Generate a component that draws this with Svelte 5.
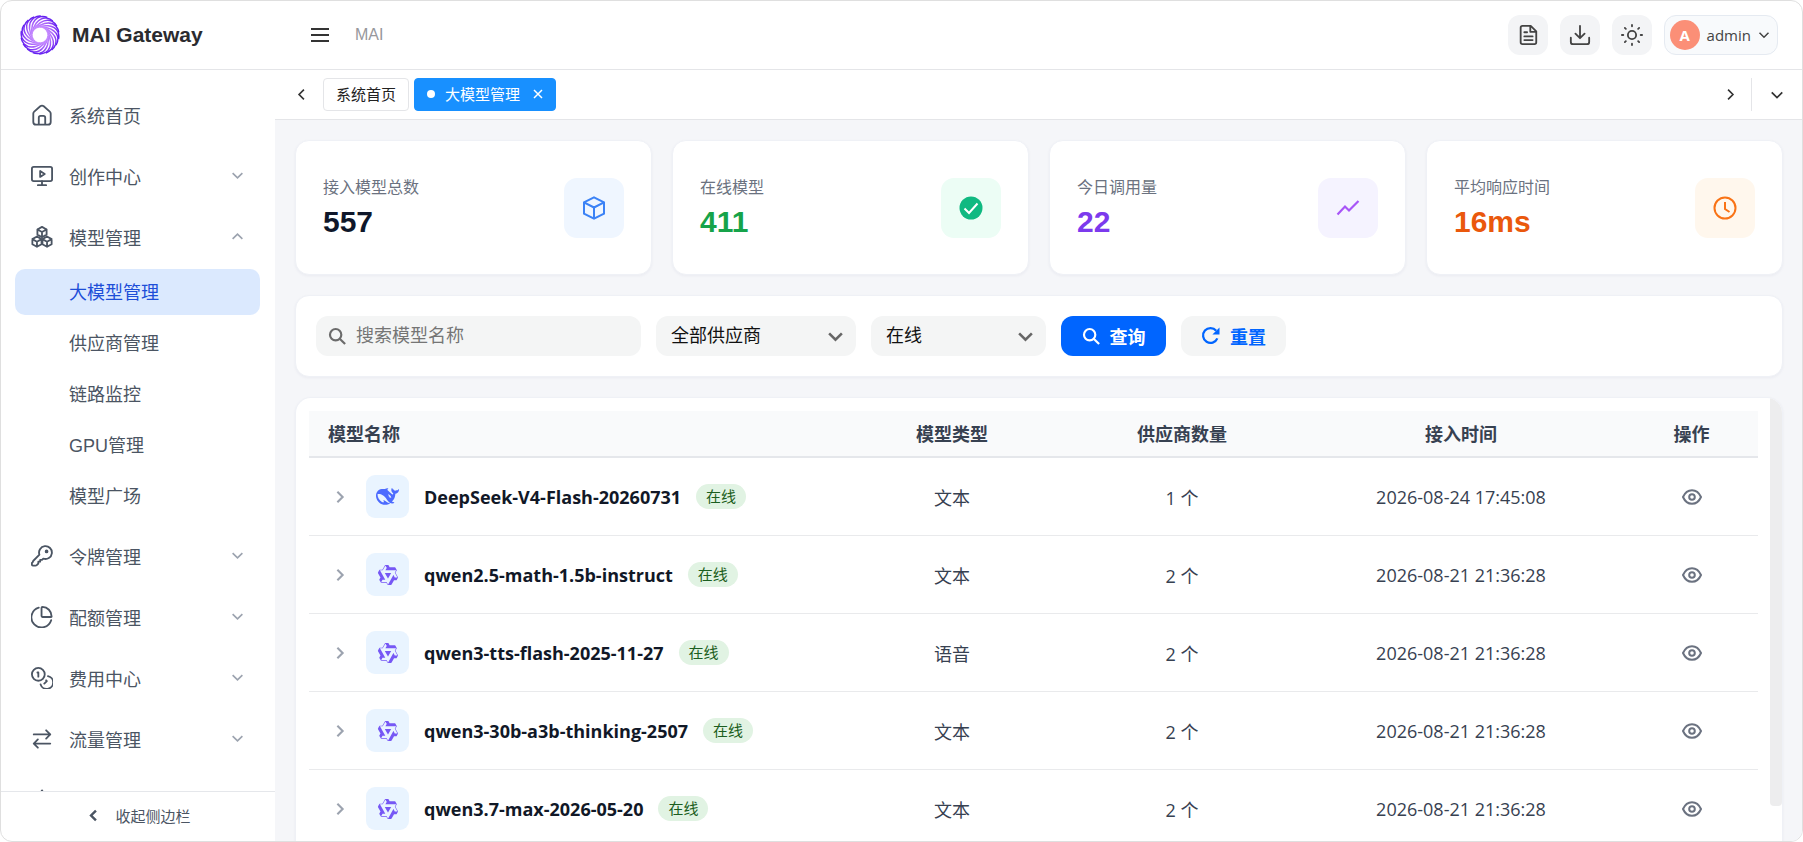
<script lang="ts">
    type MenuItem = {
        label?: string
        icon: string
        open?: boolean
        leaf?: boolean
        children?: string[]
    }

    const menu: MenuItem[] = [
        {label: "系统首页", icon: "home", leaf: true},
        {label: "创作中心", icon: "screen"},
        {
            label: "模型管理",
            icon: "cubes",
            open: true,
            children: ["大模型管理", "供应商管理", "链路监控", "GPU管理", "模型广场"]
        },
        {label: "令牌管理", icon: "key"},
        {label: "配额管理", icon: "pie"},
        {label: "费用中心", icon: "coins"},
        {label: "流量管理", icon: "swap"},
        {icon: "gear"}
    ]

    const stats = [
        {label: "接入模型总数", value: "557", kind: "total"},
        {label: "在线模型", value: "411", kind: "online"},
        {label: "今日调用量", value: "22", kind: "calls"},
        {label: "平均响应时间", value: "16ms", kind: "latency"}
    ]

    const models = [
        {name: "DeepSeek-V4-Flash-20260731", vendor: "deepseek", type: "文本", suppliers: 1, time: "2026-08-24 17:45:08"},
        {name: "qwen2.5-math-1.5b-instruct", vendor: "qwen", type: "文本", suppliers: 2, time: "2026-08-21 21:36:28"},
        {name: "qwen3-tts-flash-2025-11-27", vendor: "qwen", type: "语音", suppliers: 2, time: "2026-08-21 21:36:28"},
        {name: "qwen3-30b-a3b-thinking-2507", vendor: "qwen", type: "文本", suppliers: 2, time: "2026-08-21 21:36:28"},
        {name: "qwen3.7-max-2026-05-20", vendor: "qwen", type: "文本", suppliers: 2, time: "2026-08-21 21:36:28"}
    ]

    const blades = Array.from({length: 18}, (_, i) => i * 20)

    let active = $state("大模型管理")
    let keyword = $state("")
</script>

{#snippet chevron(dir: string, size: number, width: number)}
    <svg class="chevron {dir}" width={size} height={size} viewBox="0 0 16 16" fill="none" stroke="currentColor" stroke-width={width}>
        <path d="M2 5l6 6 6-6" />
    </svg>
{/snippet}

{#snippet menuIcon(name: string)}
    <svg class="menu-icon" viewBox="0 0 24 24" fill="none" stroke="currentColor" stroke-width="2" stroke-linecap="round" stroke-linejoin="round">
        {#if name == "home"}
            <path d="M2.5 10.5a3 3 0 0 1 1-2.2l6.600-5.800a3 3 0 0 1 3.800 0l6.600 5.800a3 3 0 0 1 1 2.200v9a3 3 0 0 1-3 3h-13a3 3 0 0 1-3-3z" />
            <path d="M8.500 22v-7a2 2 0 0 1 2-2h3a2 2 0 0 1 2 2v7" />
        {:else if name == "screen"}
            <rect x="1" y="2" width="22" height="15.500" rx="2" />
            <path d="M10 6.500v6.500l5-3.250zM12 17.500v4M7.500 22h9" />
        {:else if name == "cubes"}
            <path d="M12 1l5 2.800v5.600l-5 2.800-5-2.800V3.800zM7 3.800l5 2.800 5-2.800M12 6.600v5.600" />
            <path d="M6.500 11.500l5 2.800v5.600l-5 2.800-5-2.800v-5.600zM1.500 14.300l5 2.800 5-2.800M6.500 17.100v5.600" />
            <path d="M17.500 11.500l5 2.800v5.600l-5 2.800-5-2.800v-5.600zM12.500 14.300l5 2.800 5-2.800M17.500 17.100v5.600" />
        {:else if name == "key"}
            <path d="M2 18.600a2 2 0 0 1 .6-1.400l6.600-6.600a7 7 0 1 1 4.200 4.200L12 16.200h-2v2H8v2l-1.700 1.700a2 2 0 0 1-1.400.6H2a1 1 0 0 1-1-1v-1.900z" />
            <circle cx="17" cy="7" r="1" fill="currentColor" />
        {:else if name == "pie"}
            <path d="M22 15.500A11 11 0 1 1 8.500 1.800" />
            <path d="M22.500 11.500c0-6-4.500-10.300-10-10.500-.6 0-1 .4-1 1v9c0 .6.4 1 1 1h9c.6 0 1 .1 1-.5z" />
        {:else if name == "coins"}
            <circle cx="8" cy="8" r="7" />
            <path d="M7 6h1v4.500M18.500 10a7 7 0 1 1-8 9M16.500 14.500l.8.800-2.800 2.800" />
        {:else if name == "swap"}
            <path d="M3 7h18l-4.500-4.500M21 7l-4.500 4.500M21 17H3l4.500-4.500M3 17l4.500 4.500" />
        {:else}
            <circle cx="12" cy="12" r="3" />
            <path d="M12 1.500l2 3.500 4-.500 .5 4 4 2-2 3.500 1 4-4 1-2 3.500-3.500-1.500-3.500 1.500-2-3.500-4-1 1-4-2-3.500 4-2 .5-4 4 .5z" />
        {/if}
    </svg>
{/snippet}

{#snippet searchIcon()}
    <svg width="18" height="18" viewBox="0 0 20 20" fill="none" stroke="currentColor" stroke-width="2.400">
        <circle cx="8.500" cy="8.500" r="6.300" />
        <path d="M13 13l6 6" />
    </svg>
{/snippet}

<div class="app">
    <header>
        <div class="brand">
            <svg class="logo" viewBox="-20 -20 40 40" fill="none">
                <defs>
                    <radialGradient id="swirl" gradientUnits="userSpaceOnUse" cx="0" cy="0" r="20">
                        <stop offset="0.400" stop-color="#c58bff" />
                        <stop offset="0.750" stop-color="#9a4ff8" />
                        <stop offset="1" stop-color="#5614ee" />
                    </radialGradient>
                </defs>
                <g stroke="url(#swirl)" stroke-width="1.500">
                    {#each blades as angle}
                        <path transform="rotate({angle})" d="M-3 -7.500C3 -10 14 -11 18 -3C19 0 19 2 18.500 4" />
                    {/each}
                </g>
            </svg>
            <span>MAI Gateway</span>
        </div>
        <button class="plain" aria-label="菜单">
            <svg width="18" height="16" viewBox="0 0 18 16" stroke="currentColor" stroke-width="2">
                <path d="M0 2h18M0 8h18M0 14h18" />
            </svg>
        </button>
        <span class="crumb">MAI</span>
        <div class="tools">
            <button class="tool" aria-label="文档">
                <svg viewBox="0 0 24 24">
                    <path d="M4 4a2 2 0 0 1 2-2h9l6 6v12a2 2 0 0 1-2 2H6a2 2 0 0 1-2-2zM14.500 2v6.500H21M8 9h3M8 13.500h9M8 17.500h9" />
                </svg>
            </button>
            <button class="tool" aria-label="下载">
                <svg viewBox="0 0 24 24">
                    <path d="M12 2v13M7 10.500l5 5 5-5M2 15v4.500A2.500 2.500 0 0 0 4.500 22h15a2.500 2.500 0 0 0 2.500-2.500V15" />
                </svg>
            </button>
            <button class="tool" aria-label="主题">
                <svg viewBox="0 0 24 24">
                    <circle cx="12" cy="12" r="4.500" />
                    <path d="M12 1v1.500M12 21.500V23M1 12h1.500M21.500 12H23M4.200 4.200l1.100 1.100M18.700 18.700l1.100 1.100M4.200 19.800l1.100-1.100M18.700 5.300l1.100-1.100" />
                </svg>
            </button>
            <button class="user">
                <span class="avatar">A</span>
                <span>admin</span>
                {@render chevron("down", 12, 2)}
            </button>
        </div>
    </header>

    <div class="body">
        <aside>
            <nav>
                {#each menu as item}
                    <div class="group">
                        <button class="item">
                            {@render menuIcon(item.icon)}
                            {#if item.label}
                                <span>{item.label}</span>
                            {/if}
                            {#if !item.leaf}
                                {@render chevron(item.open ? "up" : "down", 13, 2)}
                            {/if}
                        </button>
                        {#if item.children}
                            <div class="submenu">
                                {#each item.children as child}
                                    <button class="sub" class:active={child == active} onclick={() => active = child}>{child}</button>
                                {/each}
                            </div>
                        {/if}
                    </div>
                {/each}
            </nav>
            <button class="collapse">
                {@render chevron("left", 13, 3)}
                <span>收起侧边栏</span>
            </button>
        </aside>

        <main>
            <div class="tabs">
                <button class="plain" aria-label="向左">{@render chevron("left", 13, 2)}</button>
                <button class="tab">系统首页</button>
                <button class="tab current">
                    <span class="dot"></span>
                    大模型管理
                    <svg width="10" height="10" viewBox="0 0 10 10" stroke="currentColor" stroke-width="1.500">
                        <path d="M1 1l8 8M9 1l-8 8" />
                    </svg>
                </button>
                <button class="plain next" aria-label="向右">{@render chevron("right", 13, 2)}</button>
                <button class="plain more" aria-label="更多">{@render chevron("down", 14, 2)}</button>
            </div>

            <div class="content">
                <section class="stats">
                    {#each stats as stat}
                        <div class="card stat {stat.kind}">
                            <div class="stat-text">
                                <div class="stat-label">{stat.label}</div>
                                <div class="stat-value">{stat.value}</div>
                            </div>
                            <div class="stat-icon">
                                <svg width="24" height="24" viewBox="0 0 24 24" fill="none" stroke="currentColor" stroke-width="2">
                                    {#if stat.kind == "total"}
                                        <path d="M12 1.300l10 5v11.400l-10 5-10-5V6.300zM2 6.300l10 5.200 10-5.200M12 11.500v11" />
                                    {:else if stat.kind == "online"}
                                        <circle cx="12" cy="12" r="11.500" fill="currentColor" stroke="none" />
                                        <path d="M5.500 12.500l4.500 4.500 8.500-9.500" stroke="#fff" />
                                    {:else if stat.kind == "calls"}
                                        <path d="M1.500 18.500l7.500-8 4 4L22.500 5" stroke-width="2.200" />
                                    {:else}
                                        <circle cx="12" cy="12" r="10.500" />
                                        <path d="M12 6v7l4.500 3" />
                                    {/if}
                                </svg>
                            </div>
                        </div>
                    {/each}
                </section>

                <form class="card filters">
                    <label class="search">
                        {@render searchIcon()}
                        <input type="text" placeholder="搜索模型名称" aria-label="搜索模型名称" bind:value={keyword} />
                    </label>
                    <label class="select vendor">
                        <select aria-label="供应商">
                            <option>全部供应商</option>
                        </select>
                        {@render chevron("down", 17, 2.4)}
                    </label>
                    <label class="select status">
                        <select aria-label="状态">
                            <option>在线</option>
                            <option>离线</option>
                        </select>
                        {@render chevron("down", 17, 2.4)}
                    </label>
                    <button type="button" class="btn primary">
                        {@render searchIcon()}
                        查询
                    </button>
                    <button type="button" class="btn">
                        <svg width="19" height="19" viewBox="0 0 20 20" fill="none" stroke="currentColor" stroke-width="2.400">
                            <path d="M17.200 13A7.800 7.800 0 1 1 16 5" />
                            <path d="M19.500 1.500v7.500H12z" fill="currentColor" stroke="none" />
                        </svg>
                        重置
                    </button>
                </form>

                <section class="card list">
                    <div class="table-wrap">
                        <table>
                            <thead>
                                <tr>
                                    <th class="name-col">模型名称</th>
                                    <th class="type-col">模型类型</th>
                                    <th class="supplier-col">供应商数量</th>
                                    <th class="time-col">接入时间</th>
                                    <th class="action-col">操作</th>
                                </tr>
                            </thead>
                            <tbody>
                                {#each models as model}
                                    <tr>
                                        <td class="name-col">
                                            <div class="model">
                                                <button class="plain expand" aria-label="展开">{@render chevron("right", 14, 2.4)}</button>
                                                <span class="vendor-icon">
                                                    {#if model.vendor == "deepseek"}
                                                        <svg width="23" height="23" viewBox="0 0 24 24" fill="#4d6bfe">
                                                            <path d="M23.748 4.482c-.254-.124-.364.113-.512.234-.051.039-.094.09-.137.136-.372.397-.806.657-1.373.626-.829-.046-1.537.214-2.163.848-.133-.782-.575-1.248-1.247-1.548-.352-.156-.708-.311-.955-.65-.172-.241-.219-.51-.305-.774-.055-.16-.11-.323-.293-.35-.2-.031-.278.136-.356.276-.313.572-.434 1.202-.422 1.84.027 1.436.633 2.58 1.838 3.393.137.093.172.187.129.323-.082.28-.18.552-.266.833-.055.179-.137.217-.329.14a5.526 5.526 0 01-1.736-1.18c-.857-.828-1.631-1.742-2.597-2.458a11.365 11.365 0 00-.689-.471c-.985-.957.13-1.743.388-1.836.27-.098.093-.432-.779-.428-.872.004-1.67.295-2.687.684a3.055 3.055 0 01-.465.137 9.597 9.597 0 00-2.883-.102c-1.885.21-3.39 1.102-4.497 2.623C.082 8.606-.231 10.684.152 12.85c.403 2.284 1.569 4.175 3.36 5.653 1.858 1.533 3.997 2.284 6.438 2.14 1.482-.085 3.133-.284 4.994-1.86.47.234.962.327 1.78.397.63.059 1.236-.03 1.705-.128.735-.156.684-.837.419-.961-2.155-1.004-1.682-.595-2.113-.926 1.096-1.296 2.746-2.642 3.392-7.003.05-.347.007-.565 0-.845-.004-.17.035-.237.23-.256a4.173 4.173 0 001.545-.475c1.396-.763 1.96-2.015 2.093-3.517.02-.23-.004-.467-.247-.588zM11.581 18c-2.089-1.642-3.102-2.183-3.52-2.16-.392.024-.321.471-.235.763.09.288.207.486.371.739.114.167.192.416-.113.603-.673.416-1.842-.14-1.897-.167-1.361-.802-2.5-1.86-3.301-3.307-.774-1.393-1.224-2.887-1.298-4.482-.02-.386.093-.522.477-.592a4.696 4.696 0 011.529-.039c2.132.312 3.946 1.265 5.468 2.774.868.86 1.525 1.887 2.202 2.891.72 1.066 1.494 2.082 2.48 2.914.348.292.625.514.891.677-.802.09-2.14.11-3.054-.614zm1-6.44a.306.306 0 01.415-.287.302.302 0 01.2.288.306.306 0 01-.31.307.303.303 0 01-.304-.308zm3.11 1.596c-.2.081-.399.151-.59.16a1.245 1.245 0 01-.798-.254c-.274-.23-.47-.358-.552-.758a1.73 1.73 0 01.016-.588c.07-.327-.008-.537-.239-.727-.187-.156-.426-.199-.688-.199a.559.559 0 01-.254-.078c-.11-.054-.2-.172-.114-.338.028-.054.16-.186.192-.21.356-.202.767-.136 1.146.016.352.144.618.408 1.001.782.391.451.462.576.685.914.176.265.336.537.445.848.067.195-.019.354-.25.452z" />
                                                        </svg>
                                                    {:else}
                                                        <svg width="22" height="22" viewBox="0 0 24 24" fill="#7657f5">
                                                            <path d="M12.604 1.34c.393.69.784 1.382 1.174 2.075a.18.18 0 00.157.091h5.552c.174 0 .322.11.446.327l1.454 2.57c.19.337.24.478.024.837-.26.43-.513.864-.76 1.3l-.367.658c-.106.196-.223.28-.04.512l2.652 4.637c.172.301.111.494-.043.77-.437.785-.882 1.564-1.335 2.34-.159.272-.352.375-.68.37-.777-.016-1.552-.01-2.327.016a.099.099 0 00-.081.05 575.097 575.097 0 01-2.705 4.74c-.169.293-.38.363-.725.364-.997.003-2.002.004-3.017.002a.537.537 0 01-.465-.271l-1.335-2.323a.09.09 0 00-.083-.049H4.982c-.285.03-.553-.001-.805-.092l-1.603-2.77a.543.543 0 01-.002-.54l1.207-2.12a.198.198 0 000-.197 550.951 550.951 0 01-1.875-3.272l-.79-1.395c-.16-.31-.173-.496.095-.965.465-.813.927-1.625 1.387-2.436.132-.234.304-.334.584-.335a338.3 338.3 0 012.589-.001.124.124 0 00.107-.063l2.806-4.895a.488.488 0 01.422-.246c.524-.001 1.053 0 1.583-.006L11.704 1c.341-.003.724.032.9.34zm-3.432.403a.06.06 0 00-.052.03L6.254 6.788a.157.157 0 01-.135.078H3.253c-.056 0-.07.025-.041.074l5.81 10.156c.025.042.013.062-.034.063l-2.795.015a.218.218 0 00-.2.116l-1.32 2.31c-.044.078-.021.118.068.118l5.716.008c.046 0 .08.02.104.061l1.403 2.454c.046.081.092.082.139 0l5.006-8.76.783-1.382a.055.055 0 01.096 0l1.424 2.53a.122.122 0 00.107.062l2.763-.02a.04.04 0 00.035-.02.041.041 0 000-.04l-2.9-5.086a.108.108 0 010-.113l.293-.507 1.12-1.977c.024-.041.012-.062-.035-.062H9.2c-.059 0-.073-.026-.043-.077l1.434-2.505a.107.107 0 000-.114L9.225 1.774a.06.06 0 00-.053-.031zm6.29 8.02c.046 0 .058.02.034.06l-.832 1.465-2.613 4.585a.056.056 0 01-.05.029.058.058 0 01-.05-.029L8.498 9.841c-.02-.034-.01-.052.028-.054l.216-.012 6.722-.012z" />
                                                        </svg>
                                                    {/if}
                                                </span>
                                                <strong>{model.name}</strong>
                                                <span class="badge">在线</span>
                                            </div>
                                        </td>
                                        <td>{model.type}</td>
                                        <td>{model.suppliers} 个</td>
                                        <td>{model.time}</td>
                                        <td>
                                            <button class="plain view" aria-label="查看">
                                                <svg width="20" height="16" viewBox="0 0 20 16" fill="none" stroke="currentColor" stroke-width="2">
                                                    <path d="M1 8C3 3.500 6 1.200 10 1.200S17 3.500 19 8c-2 4.500-5 6.800-9 6.800S3 12.500 1 8z" />
                                                    <circle cx="10" cy="8" r="2.800" />
                                                </svg>
                                            </button>
                                        </td>
                                    </tr>
                                {/each}
                            </tbody>
                        </table>
                    </div>
                    <div class="track"><div class="thumb"></div></div>
                </section>
            </div>
        </main>
    </div>
</div>

<style>
    :global(body) {
        background: #fff;
    }

    .app {
        --sans: "Liberation Sans", "Noto Sans CJK SC", sans-serif;
        --ui: "Open Sans", "Noto Sans CJK SC", sans-serif;
        box-sizing: border-box;
        display: flex;
        flex-direction: column;
        height: 100vh;
        border: 1px solid #dfdfdf;
        border-radius: 12px;
        overflow: hidden;
        background: #fff;
        font-family: var(--sans);
        color: #333;
    }

    .app * {
        box-sizing: border-box;
    }

    button {
        display: flex;
        align-items: center;
        flex-shrink: 0;
        margin: 0;
        padding: 0;
        border: none;
        background: transparent;
        color: inherit;
        font-family: inherit;
        cursor: pointer;
    }

    svg {
        display: block;
        flex-shrink: 0;
    }

    .chevron.up {
        transform: rotate(180deg);
    }

    .chevron.left {
        transform: rotate(90deg);
    }

    .chevron.right {
        transform: rotate(-90deg);
    }

    header {
        display: flex;
        align-items: center;
        flex-shrink: 0;
        height: 69px;
        padding-right: 24px;
        border-bottom: 1px solid #e4e5e8;
    }

    .brand {
        display: flex;
        align-items: center;
        gap: 12px;
        width: 310px;
        padding-left: 19px;
        font-size: 21px;
        font-weight: 700;
        color: #2b2b2f;
    }

    .logo {
        width: 40px;
        height: 40px;
    }

    .crumb {
        margin-left: 26px;
        font-size: 16px;
        color: #97989c;
    }

    .tools {
        display: flex;
        gap: 12px;
        margin-left: auto;
    }

    .tool {
        justify-content: center;
        width: 40px;
        height: 40px;
        border-radius: 12px;
        background: #f3f4f6;
    }

    .tool svg {
        width: 22px;
        height: 22px;
        fill: none;
        stroke: #444;
        stroke-width: 2;
        stroke-linecap: round;
        stroke-linejoin: round;
    }

    .user {
        gap: 7px;
        height: 40px;
        padding: 0 7px 0 5px;
        border: 1px solid #e5eaf1;
        border-radius: 12px;
        background: #f8fafc;
        font-family: var(--ui);
        font-size: 15px;
        color: #444;
    }

    .avatar {
        display: grid;
        place-items: center;
        width: 30px;
        height: 30px;
        border-radius: 50%;
        background: #fb8f77;
        color: #fff;
        font-weight: 700;
    }

    .body {
        display: flex;
        flex: 1;
        min-height: 0;
    }

    aside {
        display: flex;
        flex-direction: column;
        flex-shrink: 0;
        width: 274px;
    }

    nav {
        display: flex;
        flex-direction: column;
        flex: 1;
        gap: 10px;
        min-height: 0;
        padding: 19px 15px 0 14px;
        overflow: hidden;
    }

    .group {
        flex-shrink: 0;
    }

    .item {
        gap: 16px;
        width: 100%;
        height: 51px;
        padding: 0 16px;
        font-size: 18px;
        color: #4b5563;
    }

    .menu-icon {
        width: 22px;
        height: 22px;
    }

    .item .chevron {
        margin-left: auto;
        color: #9ca3af;
    }

    .submenu {
        display: flex;
        flex-direction: column;
        gap: 5px;
        padding: 7px 0 1px;
    }

    .sub {
        height: 46px;
        padding: 0 0 2px 54px;
        border-radius: 10px;
        font-size: 18px;
        color: #4b5563;
    }

    .sub.active {
        background: #dbe9fe;
        color: #1d4ed8;
    }

    .collapse {
        justify-content: center;
        gap: 15px;
        height: 50px;
        padding: 0 0 2px 2px;
        border-top: 1px solid #e5e7eb;
        font-size: 15px;
        color: #4b5563;
    }

    main {
        display: flex;
        flex-direction: column;
        flex: 1;
        min-width: 0;
    }

    .tabs {
        display: flex;
        align-items: center;
        gap: 5px;
        flex-shrink: 0;
        height: 50px;
        padding: 0 18px 0 20px;
        border-bottom: 1px solid #e4e5e8;
    }

    .tab {
        height: 33px;
        margin-left: 10px;
        padding: 0 12px 2px;
        border: 1px solid #e4e5e8;
        border-radius: 4px;
        font-size: 15px;
        color: #222;
    }

    .tab.current {
        gap: 10px;
        margin-left: 0;
        border-color: #1890ff;
        background: #1890ff;
        color: #fff;
    }

    .tab svg {
        margin-left: 3px;
    }

    .dot {
        width: 8px;
        height: 8px;
        border-radius: 50%;
        background: #fff;
    }

    .next {
        margin-left: auto;
        margin-right: 9px;
    }

    .more {
        height: 33px;
        padding-left: 18px;
        border-left: 1px solid #e4e5e8;
    }

    .content {
        display: flex;
        flex-direction: column;
        flex: 1;
        gap: 20px;
        min-height: 0;
        padding: 20px 19px 0 20px;
        background: #f5f6f9;
    }

    .card {
        border: 1px solid #eff1f6;
        border-radius: 14px;
        background: #fff;
        box-shadow: 0 1px 3px rgba(30, 40, 90, 0.05);
    }

    .stats {
        display: grid;
        grid-template-columns: repeat(4, 1fr);
        gap: 20px;
    }

    .stat {
        display: flex;
        align-items: center;
        justify-content: space-between;
        height: 135px;
        padding: 0 27px;
    }

    .stat-text {
        padding-top: 2px;
    }

    .stat-label {
        font-size: 16px;
        line-height: 26px;
        color: #6b7280;
    }

    .stat-value {
        font-size: 30px;
        font-weight: 700;
        line-height: 42px;
        color: #0f172a;
    }

    .stat-icon {
        display: grid;
        place-items: center;
        width: 60px;
        height: 60px;
        border-radius: 13px;
        background: #eff6ff;
        color: #3b82f6;
    }

    .online .stat-value {
        color: #16a34a;
    }

    .online .stat-icon {
        background: #ecfdf5;
        color: #10b981;
    }

    .calls .stat-value {
        color: #7c3aed;
    }

    .calls .stat-icon {
        background: #f5f3ff;
        color: #a855f7;
    }

    .latency .stat-value {
        color: #ea580c;
    }

    .latency .stat-icon {
        background: #fff7ed;
        color: #f97316;
    }

    .filters {
        display: flex;
        gap: 15px;
        padding: 20px;
    }

    .search,
    .select,
    .btn {
        height: 40px;
        border-radius: 12px;
        background: #f4f5f5;
        font-size: 18px;
    }

    .search {
        display: flex;
        align-items: center;
        gap: 10px;
        width: 325px;
        padding: 0 12px;
        color: #6b6b6b;
    }

    input,
    select {
        width: 100%;
        min-width: 0;
        height: 100%;
        padding: 0;
        border: none;
        outline: none;
        background: transparent;
        font: inherit;
        color: #111;
    }

    input::placeholder {
        color: #757575;
    }

    .select {
        display: grid;
        align-items: center;
        color: #666;
    }

    .select > * {
        grid-area: 1 / 1;
    }

    .select .chevron {
        justify-self: end;
        margin-right: 12px;
        pointer-events: none;
    }

    select {
        appearance: none;
        padding-left: 15px;
    }

    .vendor {
        width: 200px;
    }

    .status {
        width: 175px;
    }

    .btn {
        justify-content: center;
        gap: 10px;
        width: 105px;
        padding-bottom: 1px;
        font-weight: 700;
        color: #0065ff;
    }

    .primary {
        background: #0065ff;
        color: #fff;
    }

    .list {
        display: flex;
        flex: 1;
        min-height: 0;
        border-bottom: none;
        border-radius: 16px 16px 0 0;
        overflow: hidden;
    }

    .table-wrap {
        flex: 1;
        min-width: 0;
        padding: 13px 12px 0 13px;
    }

    table {
        width: 100%;
        border-collapse: separate;
        border-spacing: 0;
        table-layout: fixed;
        font-family: var(--ui);
        font-size: 18px;
        color: #374151;
    }

    th {
        height: 47px;
        padding: 0 0 2px;
        border-bottom: 2px solid #e5e7eb;
        background: #f9fafb;
        font-weight: 700;
        text-align: center;
    }

    td {
        height: 78px;
        padding: 0;
        border-bottom: 1px solid #e9eaec;
        text-align: center;
    }

    .name-col {
        padding-left: 19px;
        text-align: left;
    }

    .type-col,
    .supplier-col {
        width: 230px;
    }

    .time-col {
        width: 328px;
    }

    .action-col {
        width: 133px;
    }

    .model {
        display: flex;
        align-items: center;
        gap: 15px;
    }

    .model strong {
        font-weight: 700;
        color: #111827;
    }

    .expand {
        justify-content: center;
        width: 23px;
        color: #9ca3af;
    }

    .vendor-icon {
        display: grid;
        place-items: center;
        width: 43px;
        height: 43px;
        border-radius: 9px;
        background: #e9f4ff;
    }

    .badge {
        height: 25px;
        padding: 0 10px;
        border-radius: 13px;
        background: #e1f3e3;
        font-size: 15px;
        line-height: 25px;
        color: #1b5e20;
    }

    .view {
        margin: 0 auto;
        color: #6b7280;
    }

    .track {
        width: 12px;
    }

    .thumb {
        height: 92%;
        border-radius: 0 0 4px 4px;
        background: #ededee;
    }
</style>
